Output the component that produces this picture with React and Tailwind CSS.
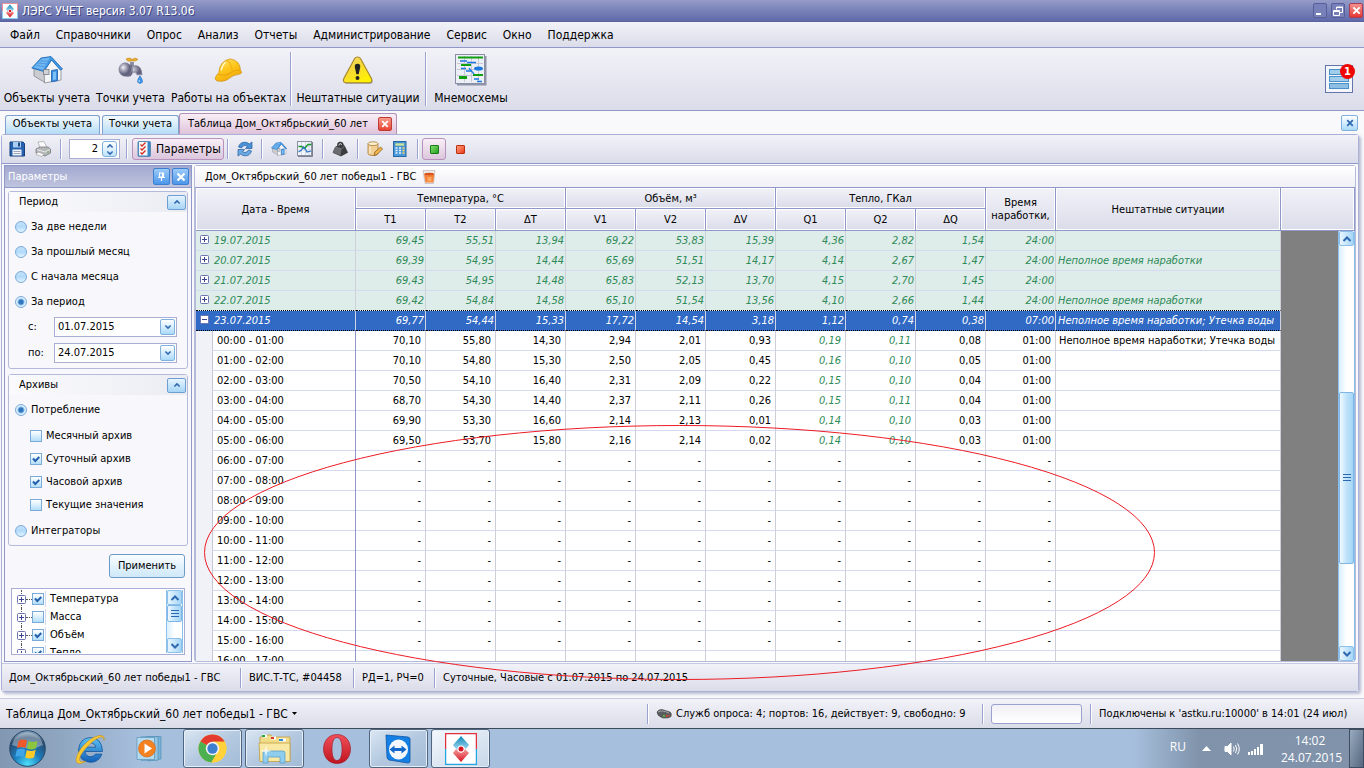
import React from "react";

const BAR = "bg-linear-to-b from-[#f2f2f8] to-[#dadce9]";

/* ---------- icons ---------- */

function LogoIcon({ className }) {
  return (
    <svg className={className} viewBox="0 0 32 32" aria-hidden="true">
      <defs>
        <linearGradient id="lgBlue" x1="0" y1="0" x2="0" y2="1">
          <stop offset="0" stopColor="#0a86b8" />
          <stop offset="1" stopColor="#a9dcf2" />
        </linearGradient>
        <linearGradient id="lgRed" x1="0" y1="0" x2="0" y2="1">
          <stop offset="0" stopColor="#f4a0a0" />
          <stop offset="1" stopColor="#d81420" />
        </linearGradient>
      </defs>
      <rect width="32" height="32" fill="#fff" />
      <path d="M.6 16V.6h30.8V16" fill="none" stroke="#e0323c" strokeWidth="1.3" />
      <path d="M.6 16v15.4h30.8V16" fill="none" stroke="#22a6e2" strokeWidth="1.3" />
      <path d="M16 3l8 9-3 4-5-3-4 4-4-5z" fill="url(#lgBlue)" />
      <path d="M16 29l-8-9 3-4 5 4 4-4 4 4z" fill="url(#lgRed)" />
      <circle cx="16" cy="16" r="3.500" fill="#fff" />
      <circle cx="16" cy="16" r="2.500" fill="#d81420" />
    </svg>
  );
}

function HouseIcon({ className }) {
  return (
    <svg className={className} viewBox="0 0 32 28" aria-hidden="true">
      <path d="M3 11v9l11 6.500V12z" fill="#c9ccd0" stroke="#85898f" strokeWidth=".8" />
      <path d="M13 14l8-10.500 9 10V24l-16.500 3z" fill="#f4f5f7" stroke="#85898f" strokeWidth=".8" />
      <path d="M10 2l10-1.500L31.500 13l-2.200 1L20.500 4 13 15.500.8 12z" fill="#3d98e8" stroke="#1c66ac" strokeWidth=".8" />
      <path d="M10.500 2.800L19 1.600 12 14 2.500 11.200z" fill="#6fb6f2" />
      <path d="M6.500 7l9 .8M4.500 9.200l9 1.500M8.500 4.800l8.500.4" stroke="#3c88d0" strokeWidth=".6" />
      <rect x="12.500" y="13.500" width="5.500" height="5" fill="#cfd3d8" stroke="#777c84" strokeWidth=".8" />
      <path d="M20.500 14.500l6-1v11.200l-6 1z" fill="#3d8ee0" stroke="#1c5ea8" strokeWidth=".8" />
      <path d="M22 16l3-.5v8L22 24z" fill="#7cc0f6" />
    </svg>
  );
}

function TapIcon({ className }) {
  return (
    <svg className={className} viewBox="0 0 26 28" aria-hidden="true">
      <defs>
        <radialGradient id="tap" cx=".35" cy=".35">
          <stop offset="0" stopColor="#f3f3fa" />
          <stop offset=".5" stopColor="#a3a3b8" />
          <stop offset="1" stopColor="#62627c" />
        </radialGradient>
      </defs>
      <path d="M12 5h4v7h-4z" fill="#8a8aa2" />
      <path d="M8 2q4-2 6 .5Q18 0 20 2.500 18 5 14 3.800 9 5.500 8 2z" fill="#f0b52c" stroke="#b57a10" strokeWidth=".6" />
      <path d="M8 9h8q8-1 8.500 9.500H19q0-3-4-2.500-2 5-7 4z" fill="url(#tap)" stroke="#8a8aa2" strokeWidth=".6" />
      <ellipse cx="7" cy="13" rx="6.500" ry="7" fill="url(#tap)" stroke="#7a7a94" strokeWidth=".6" />
      <path d="M13 8q3 6-1 12" fill="none" stroke="#5f5f78" />
      <path d="M22.300 19.500q3.400 5 2.400 6.800-2.400 2.400-4.600 0-1-2 2.200-6.800z" fill="#3c96ec" stroke="#1d68b8" strokeWidth=".6" />
      <circle cx="21.500" cy="25" r=".8" fill="#d5ecff" />
    </svg>
  );
}

function HelmetIcon({ className }) {
  return (
    <svg className={className} viewBox="0 0 30 26" aria-hidden="true">
      <defs>
        <linearGradient id="helm" x1="0" y1="0" x2=".6" y2="1">
          <stop offset="0" stopColor="#ffe98a" />
          <stop offset=".5" stopColor="#ffc81e" />
          <stop offset="1" stopColor="#f0a808" />
        </linearGradient>
      </defs>
      <path d="M5 15Q6 2.500 17 1q10 1.500 10.500 12 2.500 1.500 0 3.500Q20 17 13 23q-4 2-10 .8Q0 22 2 19z" fill="url(#helm)" stroke="#d29210" strokeWidth=".8" />
      <path d="M4.500 17q8 2 12.500-1.500Q21 12 27 13" fill="none" stroke="#e8a40c" strokeWidth="1.200" />
      <path d="M12 3q5-2 7 11" fill="none" stroke="#f2b416" strokeWidth="1.200" />
      <path d="M7.500 13Q8.500 7 12 4.500" fill="none" stroke="#fff6c0" strokeWidth="1.500" />
    </svg>
  );
}

function WarningIcon({ className }) {
  return (
    <svg className={className} viewBox="0 0 32 30" aria-hidden="true">
      <defs>
        <linearGradient id="warn" x1="0" y1="0" x2=".7" y2="1">
          <stop offset="0" stopColor="#f3dc80" />
          <stop offset=".45" stopColor="#f6d838" />
          <stop offset="1" stopColor="#fff200" />
        </linearGradient>
      </defs>
      <path d="M16 2.500q2 0 3 1.800L31 25q1 3.500-2.500 4h-24Q1.500 28.500 2.500 25z" fill="#777" opacity=".5" />
      <path d="M15.500 1q2.200 0 3.200 1.800L30 23.500q1.200 3.600-2.400 4.200H3.400Q0 27 1.200 23.500L12.400 2.800Q13.400 1 15.500 1z" fill="url(#warn)" stroke="#a8862a" strokeWidth="1.200" />
      <path d="M15.500 8q3.200 0 2.800 3.500L16.700 19h-2.400l-1.600-7.500Q12.300 8 15.500 8z" fill="#222" />
      <circle cx="15.500" cy="22.700" r="2" fill="#222" />
    </svg>
  );
}

function MnemoIcon({ className }) {
  return (
    <svg className={className} viewBox="0 0 32 32" aria-hidden="true">
      <rect x="2" y="2" width="29.500" height="29.500" fill="#9094a6" />
      <rect x=".5" y=".5" width="29" height="29" fill="#eceff5" stroke="#8a8fa6" />
      <path d="M2 9.500h26M2 15.500h26M2 21.500h26M9.500 2v26M16.500 2v26M23.500 2v26" stroke="#c5cad6" />
      <path d="M3 3.500h25M6 11h10M18 21h10" stroke="#12a012" strokeWidth="2" />
      <path d="M4 22h8v3H4z" fill="#12a012" />
      <path d="M5 7h7M12 8.500h9M6 14.500h5M11 17h5M19 25h5M22 27.500h5" stroke="#1c78e0" strokeWidth="1.500" />
      <ellipse cx="23.500" cy="14.500" rx="4.500" ry="2" fill="#1c78e0" />
      <path d="M14 14l5 6" stroke="#1c78e0" strokeWidth="1.200" />
    </svg>
  );
}

function SaveIcon() {
  return (
    <svg className="size-4" viewBox="0 0 16 16" aria-hidden="true">
      <path d="M1 1h13l1.500 1.500V15H1z" fill="#2461b0" stroke="#173f7a" />
      <rect x="4" y="1" width="8" height="5.500" fill="#a9cdf2" />
      <rect x="9" y="1.500" width="2" height="4" fill="#1c4886" />
      <rect x="3.500" y="8.500" width="9" height="6" fill="#f4f6fa" />
      <path d="M4.500 10.500h7M4.500 12.500h7" stroke="#9aa6bc" />
    </svg>
  );
}

function PrinterIcon() {
  return (
    <svg className="size-4" viewBox="0 0 16 16" aria-hidden="true">
      <path d="M3 1l6-.5 3 6H5z" fill="#fbfbfb" stroke="#aaa" strokeWidth=".8" />
      <path d="M1 8l4-2h8l2.500 2v4L10 15 1 12z" fill="#b4b6b8" stroke="#77797c" strokeWidth=".8" />
      <path d="M2 8.500l8 2.500 5-2.500" fill="none" stroke="#e7e8ea" />
      <path d="M3 11l6 2-2 2.500-6-2z" fill="#fafafa" stroke="#999" strokeWidth=".6" />
      <circle cx="13" cy="11" r=".8" fill="#4cb83c" />
    </svg>
  );
}

function ChecklistIcon() {
  return (
    <svg className="size-4" viewBox="0 0 16 16" aria-hidden="true">
      <rect x="2" y=".5" width="12.500" height="15" rx="1" fill="#3b86c6" stroke="#5a8cb8" />
      <rect x="3" y="1" width="8.500" height="13.500" fill="#f7f7f7" />
      <path d="M4.500 3.500L6 5l3.500-3.500M4.500 7.500L6 9l3.500-3.500M4.500 11.500L6 13l3.500-3.500" fill="none" stroke="#d42a1e" strokeWidth="1.300" />
    </svg>
  );
}

function RefreshIcon() {
  return (
    <svg className="size-4" viewBox="0 0 16 16" aria-hidden="true">
      <path d="M1.500 6Q3 1 8 1.200q3 .2 4.300 1.800L15 1v6.500H8.500L10.500 5Q8 3.500 5.500 5.500L4.500 7z" fill="#4a92d8" stroke="#235c9c" strokeWidth=".7" />
      <path d="M14.500 10Q13 15 8 14.800q-3-.2-4.300-1.800L1 15V8.500h6.500L5.500 11q2.500 1.500 5-.5l1-1.500z" fill="#6aaae4" stroke="#235c9c" strokeWidth=".7" />
    </svg>
  );
}

function ChartIcon() {
  return (
    <svg className="size-4" viewBox="0 0 16 16" aria-hidden="true">
      <rect x=".5" y=".5" width="14" height="14" fill="#f3f6fa" stroke="#8a90a2" />
      <path d="M1 15.500h14.500V1" fill="none" stroke="#7a8090" />
      <path d="M4.500 1v13M8.500 1v13M12 1v13M1 5h13M1 9h13" stroke="#c3cad8" strokeWidth=".7" />
      <path d="M1.500 5.500h3l3 2L11 3.500h3.500" fill="none" stroke="#1a9a2c" strokeWidth="1.400" />
      <path d="M1.500 11l3-2 2-3 2 2 1.500 3 4-1" fill="none" stroke="#2a74c8" strokeWidth="1.200" />
    </svg>
  );
}

function WeightIcon() {
  return (
    <svg className="size-4" viewBox="0 0 16 16" aria-hidden="true">
      <path d="M3.500 6l2-1Q5 1.200 8 1t3.500 3l1 1 3 6.500L9 15 1 11.500z" fill="#3c3c3e" stroke="#222" strokeWidth=".6" />
      <path d="M3.500 6L1 11.500 8.500 14.500 9.500 8z" fill="#6b6c70" />
      <path d="M3.500 6l6 2 3-3" fill="none" stroke="#8a8b90" strokeWidth=".7" />
      <path d="M7 4.500Q7 2.500 8.200 2.500T9.500 4" fill="none" stroke="#c8c8cc" />
    </svg>
  );
}

function EditDbIcon() {
  return (
    <svg className="size-4" viewBox="0 0 16 16" aria-hidden="true">
      <path d="M1 2.500v10q0 2 5 2t5-2v-10z" fill="#f1cf93" stroke="#a87a34" strokeWidth=".8" />
      <ellipse cx="6" cy="2.700" rx="5" ry="1.900" fill="#fff0cf" stroke="#a87a34" strokeWidth=".8" />
      <path d="M3 5.500v7" stroke="#fff5df" />
      <path d="M7 14.500l1-3.500 5.500-5 2 2-5.500 5.500z" fill="#f2b64a" stroke="#8a5a1c" strokeWidth=".8" />
    </svg>
  );
}

function CalcIcon() {
  return (
    <svg className="size-4" viewBox="0 0 16 16" aria-hidden="true">
      <rect x="1.500" y=".5" width="12.500" height="15" fill="#4b9bdc" stroke="#2868a4" />
      <rect x="3" y="2" width="9.500" height="3" fill="#c8e6a8" stroke="#3a76a8" strokeWidth=".5" />
      <path d="M3.500 7h2M7 7h2M3.500 9.500h2M7 9.500h2M3.500 12h2M7 12h2" stroke="#eaf5ff" strokeWidth="1.500" />
      <path d="M10.500 7h2M10.500 9.500h2M10.500 12h2" stroke="#ffd35c" strokeWidth="1.500" />
    </svg>
  );
}

function GlassIcon() {
  return (
    <svg className="size-4" viewBox="0 0 16 16" aria-hidden="true">
      <path d="M2 1.500h12l-1.500 13H4z" fill="#eeeaea" stroke="#c4bebe" strokeWidth=".8" />
      <path d="M3 5h10.300l-1 8.500H4.500z" fill="#f3813a" />
      <path d="M6.500 8h4v4.500h-4z" fill="#ffa862" />
      <ellipse cx="8.200" cy="5" rx="4.800" ry="1.200" fill="#d9531a" />
    </svg>
  );
}

function ModemIcon() {
  return (
    <svg className="h-3 w-4" viewBox="0 0 16 12" aria-hidden="true">
      <path d="M1 4q1-2.500 5-2.500l8 2.500q2 1.500 1 4.500-2 2-8 1.500Q1 8 1 4z" fill="#5b5d60" stroke="#3a3c3e" strokeWidth=".6" />
      <path d="M2 4q4-2.500 11 1" fill="none" stroke="#a2a4a8" />
      <circle cx="8" cy="8" r=".9" fill="#5fd23c" />
      <circle cx="11" cy="8" r=".9" fill="#f0442c" />
      <circle cx="13.300" cy="7.500" r=".8" fill="#f0442c" />
    </svg>
  );
}

function Chevron({ up, className }) {
  return (
    <svg className={className} viewBox="0 0 10 8" aria-hidden="true">
      <path d={up ? "M1.500 6L5 2.500 8.500 6" : "M1.500 2L5 5.500 8.500 2"} fill="none" stroke="#2e68b0" strokeWidth="2" />
    </svg>
  );
}

function CrossIcon({ className, color = "#2e68b0" }) {
  return (
    <svg className={className} viewBox="0 0 10 10" aria-hidden="true">
      <path d="M1.500 1.500l7 7M8.500 1.500l-7 7" stroke={color} strokeWidth="2.200" />
    </svg>
  );
}

function PlusBox({ minus }) {
  return (
    <svg className="relative size-[9px] shrink-0" viewBox="0 0 9 9" aria-hidden="true">
      <rect x=".5" y=".5" width="8" height="8" rx="1" fill="#fff" stroke="#6c74b0" />
      <path d={minus ? "M2 4.500h5" : "M2 4.500h5M4.500 2v5"} stroke="#3c4690" />
    </svg>
  );
}

/* ---------- small controls ---------- */

function Sep({ className = "h-5" }) {
  return <span className={`w-px shrink-0 bg-[#9aa3cf] shadow-[1px_0_0_#fff] ${className}`} />;
}

function Radio({ name, label, checked }) {
  return (
    <label className="flex h-[25px] items-center gap-1">
      <input
        type="radio"
        name={name}
        defaultChecked={checked}
        className="size-3 shrink-0 appearance-none rounded-full border border-[#7aaad8] bg-linear-to-b from-[#c4e2f8] via-[#b2dafa] to-[#e4f5ff] checked:bg-[radial-gradient(circle,#3474bd_0_2px,#7db9ea_3px,#dff1fd_4px)]"
      />
      {label}
    </label>
  );
}

function TickBox({ checked, label, id }) {
  return (
    <span className="grid size-3 shrink-0 place-items-center">
      <input
        id={id}
        type="checkbox"
        aria-label={label}
        defaultChecked={checked}
        className="peer size-3 appearance-none border border-[#7aaad8] bg-linear-to-b from-white to-[#b2def9] [grid-area:1/1]"
      />
      <svg className="pointer-events-none invisible size-2.5 peer-checked:visible [grid-area:1/1]" viewBox="0 0 10 10" aria-hidden="true">
        <path d="M2 4.500l2.300 2.500L8.300 3" fill="none" stroke="#2460ac" strokeWidth="2" />
      </svg>
    </span>
  );
}

function Group({ title, children }) {
  return (
    <section className="rounded-[3px] border border-[#b4bad9] bg-[#f8f8fc]">
      <header className="flex h-5 items-center justify-between bg-linear-to-r from-[#fbfbfd] to-[#ebecf3] pr-px pl-[10px]">
        <h2>{title}</h2>
        <button aria-label={`Свернуть: ${title}`} className="grid h-[15px] w-[19px] place-items-center rounded-[2px] border border-[#6f9fd0] bg-linear-to-b from-[#e6f4fd] to-[#a6d5f6]">
          <Chevron up className="h-[6px] w-2" />
        </button>
      </header>
      {children}
    </section>
  );
}

function DateField({ id, label, value }) {
  return (
    <div className="flex h-[26px] items-center">
      <label htmlFor={id} className="w-[26px]">{label}</label>
      <div className="flex h-5 w-[123px] items-center border border-[#a9afd4] bg-white pr-px">
        <input id={id} defaultValue={value} className="min-w-0 flex-1 pl-[3px] outline-none" />
        <button aria-label="Открыть календарь" className="grid h-4 w-[15px] place-items-center rounded-[2px] border border-[#7fb0de] bg-linear-to-b from-white to-[#a9dafa]">
          <Chevron className="h-[6px] w-2" />
        </button>
      </div>
    </div>
  );
}

function ScrollBar({ children }) {
  return (
    <div className="flex h-full w-[17px] flex-col border-x border-[#8cc0ea] bg-linear-to-r from-[#d9effc] via-white to-white">
      <button aria-label="Вверх" className="grid h-[15px] shrink-0 place-items-center rounded-[2px] border border-[#8cc0ea] bg-linear-to-r from-[#e8f6fe] to-[#a5d6f8]">
        <Chevron up className="h-2 w-2.5" />
      </button>
      {children}
      <button aria-label="Вниз" className="grid h-[15px] shrink-0 place-items-center rounded-[2px] border border-[#8cc0ea] bg-linear-to-r from-[#e8f6fe] to-[#a5d6f8]">
        <Chevron className="h-2 w-2.5" />
      </button>
    </div>
  );
}

function Thumb({ className }) {
  return (
    <div className={`grid place-items-center rounded-[2px] border border-[#7fb6e6] bg-linear-to-r from-[#f0f9ff] via-[#bfe3fa] to-[#a5d6f8] ${className}`}>
      <span className="h-[7px] w-2 border-y border-[#2e68b0] bg-[linear-gradient(#2e68b0,#2e68b0)] bg-[length:100%_1px] bg-center bg-no-repeat" />
    </div>
  );
}

/* ---------- data ---------- */

const MENU = ["Файл", "Справочники", "Опрос", "Анализ", "Отчеты", "Администрирование", "Сервис", "Окно", "Поддержка"];

const DAYS = [
  ["19.07.2015", "69,45", "55,51", "13,94", "69,22", "53,83", "15,39", "4,36", "2,82", "1,54", "24:00", ""],
  ["20.07.2015", "69,39", "54,95", "14,44", "65,69", "51,51", "14,17", "4,14", "2,67", "1,47", "24:00", "Неполное время наработки"],
  ["21.07.2015", "69,43", "54,95", "14,48", "65,83", "52,13", "13,70", "4,15", "2,70", "1,45", "24:00", ""],
  ["22.07.2015", "69,42", "54,84", "14,58", "65,10", "51,54", "13,56", "4,10", "2,66", "1,44", "24:00", "Неполное время наработки"],
  ["23.07.2015", "69,77", "54,44", "15,33", "17,72", "14,54", "3,18", "1,12", "0,74", "0,38", "07:00", "Неполное время наработки; Утечка воды"],
];

const DASHES = Array(10).fill("-").concat("");

const HOURS = [
  ["00:00 - 01:00", "70,10", "55,80", "14,30", "2,94", "2,01", "0,93", "0,19", "0,11", "0,08", "01:00", "Неполное время наработки; Утечка воды"],
  ["01:00 - 02:00", "70,10", "54,80", "15,30", "2,50", "2,05", "0,45", "0,16", "0,10", "0,05", "01:00", ""],
  ["02:00 - 03:00", "70,50", "54,10", "16,40", "2,31", "2,09", "0,22", "0,15", "0,10", "0,04", "01:00", ""],
  ["03:00 - 04:00", "68,70", "54,30", "14,40", "2,37", "2,11", "0,26", "0,15", "0,11", "0,04", "01:00", ""],
  ["04:00 - 05:00", "69,90", "53,30", "16,60", "2,14", "2,13", "0,01", "0,14", "0,10", "0,03", "01:00", ""],
  ["05:00 - 06:00", "69,50", "53,70", "15,80", "2,16", "2,14", "0,02", "0,14", "0,10", "0,03", "01:00", ""],
  ["06:00 - 07:00", ...DASHES],
  ["07:00 - 08:00", ...DASHES],
  ["08:00 - 09:00", ...DASHES],
  ["09:00 - 10:00", ...DASHES],
  ["10:00 - 11:00", ...DASHES],
  ["11:00 - 12:00", ...DASHES],
  ["12:00 - 13:00", ...DASHES],
  ["13:00 - 14:00", ...DASHES],
  ["14:00 - 15:00", ...DASHES],
  ["15:00 - 16:00", ...DASHES],
  ["16:00 - 17:00", ...DASHES],
];

const PARAMS = [["Температура", true], ["Масса", false], ["Объём", true], ["Тепло", true]];

/* ---------- sections ---------- */

function TitleBar() {
  const box = "grid h-[15px] w-[14px] place-items-center rounded-[2px] border";
  return (
    <header className="flex h-[22px] shrink-0 items-center gap-1 border-b border-[#5a63a0] bg-linear-to-b from-[#959cc8] to-[#5f69a9] pr-px pl-0.5">
      <LogoIcon className="size-4" />
      <h1 className="flex-1 text-[12px] text-white [text-shadow:1px_1px_0_#3d4680]">ЛЭРС УЧЕТ версия 3.07 R13.06</h1>
      <div className="flex gap-1">
        <button aria-label="Свернуть" className={`${box} border-[#565f9c] bg-[#7780b8]`}>
          <svg className="size-2.5" viewBox="0 0 10 10"><path d="M1 8h5" stroke="#fff" strokeWidth="2" /></svg>
        </button>
        <button aria-label="Восстановить" className={`${box} border-[#565f9c] bg-[#7780b8]`}>
          <svg className="size-2.5" viewBox="0 0 10 10" fill="none" stroke="#fff"><path d="M3.500 3.500V1h6v5.500H7M3.500 1.500h6" /><path d="M.5 4.500h6v5h-6zM.5 5.500h6" /></svg>
        </button>
        <button aria-label="Закрыть" className={`${box} border-[#a83c50] bg-linear-to-b from-[#f28f8f] to-[#e63232]`}>
          <CrossIcon className="size-[9px]" color="#fff" />
        </button>
      </div>
    </header>
  );
}

function BigButton({ icon, label, className }) {
  return (
    <button className={`flex shrink-0 flex-col items-center pt-[5px] ${className}`}>
      <span className="grid h-[34px] place-items-center">{icon}</span>
      <span className="mt-[3px] leading-4 whitespace-nowrap">{label}</span>
    </button>
  );
}

function MainToolbar() {
  return (
    <div className={`flex h-[63px] shrink-0 items-stretch border-b border-[#8f98c8] pl-0.5 text-[12px] ${BAR}`}>
      <BigButton className="w-[90px]" icon={<HouseIcon className="h-[28px] w-8" />} label="Объекты учета" />
      <BigButton className="w-[77px]" icon={<TapIcon className="h-[27px] w-[26px]" />} label="Точки учета" />
      <BigButton className="w-[119px]" icon={<HelmetIcon className="h-[25px] w-[29px]" />} label="Работы на объектах" />
      <Sep className="mr-[3px] ml-0.5 my-1" />
      <BigButton className="w-[128px]" icon={<WarningIcon className="h-[29px] w-8" />} label="Нештатные ситуации" />
      <Sep className="mx-[3px] my-1" />
      <BigButton className="w-[84px]" icon={<MnemoIcon className="size-8" />} label="Мнемосхемы" />
      <button aria-label="Уведомления: 1" className="relative mr-[11px] ml-auto size-[28px] self-center border border-[#6474ac] bg-[#f4f6fb] p-[3px]">
        <span className="flex h-full flex-col justify-between">
          <span className="h-[6px] border border-[#4a90c8] bg-[#9fcdea]" />
          <span className="h-[6px] border border-[#4a90c8] bg-[#9fcdea]" />
          <span className="h-[6px] border border-[#4a90c8] bg-[#8cbfe2]" />
        </span>
        <span className="absolute -top-[2px] -right-[3px] grid size-[15px] place-items-center rounded-full bg-[#f00505] text-[11px] leading-none font-bold text-white">1</span>
      </button>
    </div>
  );
}

function Tabs() {
  const tab = "h-[19px] rounded-t-[3px] border border-b-0 border-[#7f9fcc] bg-linear-to-b from-[#f3fafe] via-[#d6ebf9] to-[#b4dcf6] whitespace-nowrap";
  return (
    <nav className="flex h-[23px] shrink-0 items-end bg-[#f9f9fc] pr-[6px] pl-[5px]">
      <a href="#objects" className={`${tab} w-[95px] text-center`}>Объекты учета</a>
      <a href="#points" className={`${tab} ml-0.5 w-[77px] text-center`}>Точки учета</a>
      <div className="flex h-[21px] items-center gap-3 rounded-t-[3px] border border-b-0 border-[#b48fb8] bg-linear-to-b from-[#f8eef5] to-[#dfc3da] pr-1 pl-2">
        <a href="#table" aria-current="page" className="w-[178px] whitespace-nowrap">Таблица Дом_Октябрьский_60 лет</a>
        <button aria-label="Закрыть вкладку" className="grid size-[14px] place-items-center rounded-[2px] border border-[#c03a34] bg-linear-to-b from-[#f69a8c] to-[#e8402f]">
          <CrossIcon className="size-2" color="#fff" />
        </button>
      </div>
      <button aria-label="Закрыть" className="mb-[3px] ml-auto grid h-4 w-[17px] place-items-center rounded-[2px] border border-[#7fb0de] bg-linear-to-b from-white to-[#a9dafa]">
        <CrossIcon className="size-2" />
      </button>
    </nav>
  );
}

function Toolbar() {
  const ib = "grid size-5 place-items-center";
  const active = "rounded-[3px] border border-[#b892bc] bg-linear-to-b from-[#f8eff6] to-[#dcc6dc]";
  return (
    <div className={`flex h-[29px] shrink-0 items-center border-b border-[#8f98c8] pl-[5px] ${BAR}`}>
      <button aria-label="Сохранить" className={ib}><SaveIcon /></button>
      <button aria-label="Печать" className={`${ib} ml-[6px]`}><PrinterIcon /></button>
      <Sep className="mr-2 ml-[7px] h-5" />
      <div className="flex h-5 w-[51px] items-center border border-[#a9afd4] bg-white pr-0.5">
        <input aria-label="Количество" defaultValue="2" className="min-w-0 flex-1 pr-1 text-right outline-none" />
        <button aria-label="Изменить значение" className="flex h-4 w-[15px] flex-col items-center justify-center gap-px rounded-[3px] border border-[#7fb0de] bg-linear-to-b from-white to-[#bfe3fa]">
          <Chevron up className="h-[6px] w-2" />
          <Chevron className="h-[6px] w-2" />
        </button>
      </div>
      <Sep className="mr-[5px] ml-[6px] h-5" />
      <button className={`flex h-[22px] w-[92px] items-center gap-1 pl-[3px] text-[12px] whitespace-nowrap ${active}`}>
        <ChecklistIcon />Параметры
      </button>
      <Sep className="mr-[7px] ml-[3px] h-5" />
      <button aria-label="Обновить" className={ib}><RefreshIcon /></button>
      <Sep className="mx-[6px] h-5" />
      <button aria-label="Объект" className={`${ib} ml-px`}><HouseIcon className="size-4" /></button>
      <button aria-label="График" className={`${ib} ml-[6px]`}><ChartIcon /></button>
      <Sep className="mx-[7px] h-5" />
      <button aria-label="Масса" className={ib}><WeightIcon /></button>
      <Sep className="mx-[7px] h-5" />
      <button aria-label="Правка данных" className={ib}><EditDbIcon /></button>
      <button aria-label="Калькулятор" className={`${ib} ml-[5px]`}><CalcIcon /></button>
      <Sep className="mr-1 ml-[7px] h-5" />
      <button aria-label="Норма" className={`grid h-[22px] w-6 place-items-center ${active}`}>
        <span className="size-[9px] rounded-[1px] border border-[#167a16] bg-linear-to-br from-[#7fe06a] to-[#1fa01f]" />
      </button>
      <button aria-label="Ошибки" className={`${ib} ml-1`}>
        <span className="size-[9px] rounded-[1px] border border-[#b8300e] bg-linear-to-br from-[#ff9a7a] to-[#ea3410]" />
      </button>
    </div>
  );
}

function SidePanel() {
  const hb = "grid size-[17px] place-items-center rounded-[2px] border border-[#3d7fd0] bg-linear-to-b from-[#9ccbf8] to-[#4a96ea]";
  return (
    <aside className="flex w-[188px] shrink-0 flex-col border border-[#8f98c8] bg-[#f8f8fc] text-[11px]">
      <header className="flex h-[22px] shrink-0 items-center gap-0.5 border-b border-[#8f98c8] bg-linear-to-b from-[#a3a9d0] to-[#bfc4de] pr-0.5 pl-[3px] text-white">
        <h2 className="flex-1">Параметры</h2>
        <button aria-label="Закрепить" className={hb}>
          <svg className="size-[9px]" viewBox="0 0 9 9" fill="none" stroke="#fff" strokeWidth="1.200"><path d="M2.500 1h4v4h-4zM1 5.500h7M4.500 5.500V9M5.500 1v4" /></svg>
        </button>
        <button aria-label="Закрыть панель" className={hb}><CrossIcon className="size-2.5" color="#fff" /></button>
      </header>
      <div className="flex min-h-0 flex-1 flex-col px-[3px] pt-[3px] pb-[6px]">
        <Group title="Период">
          <div className="px-[6px] pt-[2px] pb-0.5">
            <Radio name="period" label="За две недели" />
            <Radio name="period" label="За прошлый месяц" />
            <Radio name="period" label="С начала месяца" />
            <Radio name="period" label="За период" checked />
            <div className="pl-[13px]">
              <DateField id="from" label="с:" value="01.07.2015" />
              <DateField id="to" label="по:" value="24.07.2015" />
            </div>
          </div>
        </Group>
        <div className="h-[5px] shrink-0" />
        <Group title="Архивы">
          <div className="px-[6px] pt-[2px] pb-0.5">
            <Radio name="archive" label="Потребление" checked />
            <div className="flex flex-col py-0.5 pl-[15px]">
              {[["Месячный архив", false], ["Суточный архив", true], ["Часовой архив", true], ["Текущие значения", false]].map(([t, c]) => (
                <label key={t} className="flex h-[23px] items-center gap-1">
                  <TickBox checked={c} />{t}
                </label>
              ))}
            </div>
            <Radio name="archive" label="Интеграторы" />
          </div>
        </Group>
        <button className="mt-[8px] mr-[3px] h-6 w-[76px] shrink-0 self-end rounded-[3px] border border-[#6b9cc6] bg-linear-to-b from-[#fbfdff] via-[#e2f2fc] to-[#cfe8f8]">Применить</button>
        <div className="mx-[3px] mt-2.5 flex min-h-0 flex-1 border border-[#a9afd4] bg-white p-px">
          <ul className="flex-1 overflow-hidden">
            {PARAMS.map(([t, c]) => (
              <li key={t} className="relative flex h-[18px] items-center pl-1 before:absolute before:inset-y-0 before:left-2 before:border-l before:border-dotted before:border-[#555]">
                <PlusBox />
                <span className="w-[6px] border-t border-dotted border-[#555]" />
                <TickBox checked={c} id={`p-${t}`} />
                <label htmlFor={`p-${t}`} className="ml-px border-l border-[#d5d9ee] pl-1">{t}</label>
              </li>
            ))}
          </ul>
          <ScrollBar>
            <Thumb className="h-[17px]" />
            <span className="flex-1" />
          </ScrollBar>
        </div>
      </div>
    </aside>
  );
}

const TH = "border-r border-b border-[#8f98c8] bg-linear-to-b from-[#f2f2f8] to-[#dadce9] p-0 text-center font-normal shadow-[inset_0_0_0_1px_#fff]";

function DataTable() {
  return (
    <div className="relative min-h-0 flex-1 overflow-hidden border-t border-[#8f98c8] bg-[#808080]">
      <table className="w-full table-fixed border-separate border-spacing-0 border-l border-[#b4bad9] text-[11px] leading-[13px]">
        <colgroup>
          <col className="w-[160px]" />
          {Array.from({ length: 10 }, (_, i) => <col key={i} className="w-[70px]" />)}
          <col className="w-[225px]" />
          <col />
        </colgroup>
        <thead>
          <tr className="h-[21px]">
            <th rowSpan={2} className={TH}>Дата - Время</th>
            <th colSpan={3} className={TH}>Температура, °С</th>
            <th colSpan={3} className={TH}>Объём, м³</th>
            <th colSpan={3} className={TH}>Тепло, ГКал</th>
            <th rowSpan={2} className={TH}>Время наработки,</th>
            <th rowSpan={2} className={TH}>Нештатные ситуации</th>
            <td rowSpan={2} className={TH} />
          </tr>
          <tr className="h-[22px]">
            {["T1", "T2", "ΔT", "V1", "V2", "ΔV", "Q1", "Q2", "ΔQ"].map((h) => <th key={h} className={TH}>{h}</th>)}
          </tr>
        </thead>
        <tbody>
          {DAYS.map((row, r) => {
            const sel = r === DAYS.length - 1;
            const dotted = "border-b [border-bottom-style:dotted] border-b-black";
            const line = sel
              ? `${dotted} border-r-[#d0d3e6]`
              : r === DAYS.length - 2
                ? `${dotted} border-r-[#cdd0d4]`
                : "border-b border-b-[#d5d9f2] border-r-[#cdd0d4]";
            return (
              <tr key={row[0]} className={`h-5 italic ${sel ? "bg-[#316ac5] text-white" : "bg-[#deecea] text-[#2e8b57]"}`}>
                <td className={`border-r p-0 ${line}`}>
                  <span className="flex items-center gap-[5px] pl-1">
                    <button aria-label={sel ? "Свернуть день" : "Развернуть день"} className="mb-[3px]"><PlusBox minus={sel} /></button>
                    {row[0]}
                  </span>
                </td>
                {row.slice(1, 11).map((v, i) => <td key={i} className={`border-r p-0 pr-px text-right ${line}`}>{v}</td>)}
                <td className={`overflow-hidden border-r p-0 pl-[2px] whitespace-nowrap ${line}`}>{row[11]}</td>
                <td className="bg-[#808080] p-0" />
              </tr>
            );
          })}
          {HOURS.map((row) => (
            <tr key={row[0]} className="h-5 bg-white">
              <td className="border-r border-[#8f98c8] bg-[#f1f2f7] p-0 pl-4">
                <span className="flex h-5 items-center border-b border-l border-b-[#d5d9f2] border-l-[#c3c7d8] bg-white pl-1">{row[0]}</span>
              </td>
              {row.slice(1, 11).map((v, i) => (
                <td key={i} className={`border-r border-b border-r-[#cdced6] border-b-[#d5d9f2] p-0 pr-1 text-right ${(i === 6 || i === 7) && v !== "-" ? "text-[#2e8b57] italic" : ""}`}>{v}</td>
              ))}
              <td className="overflow-hidden border-r border-b border-r-[#cdced6] border-b-[#d5d9f2] p-0 pl-[3px] whitespace-nowrap">{row[11]}</td>
              <td className="bg-[#808080] p-0" />
            </tr>
          ))}
        </tbody>
      </table>
      <div className="absolute top-[43px] right-0 bottom-0">
        <ScrollBar>
          <span className="flex-[147_1_0]" />
          <Thumb className="flex-[171_1_0]" />
          <span className="flex-[83_1_0]" />
        </ScrollBar>
      </div>
    </div>
  );
}

function Taskbar() {
  const btn = "grid h-[39px] w-[59px] place-items-center rounded-[3px] border border-[#4f6580] shadow-[inset_0_0_0_1px_#e6eef7] bg-linear-to-br";
  const idle = "from-[#dbe6f2] via-[#b4c9e0] to-[#a2bbd6]";
  return (
    <footer className="flex h-10 shrink-0 items-center border-t border-[#3c4a5c] bg-[linear-gradient(90deg,#8298b2_0,#8fa6c1_60px,#a6bfdc_140px,#a6bfdc_calc(100%_-_230px),#8093ab_calc(100%_-_165px),#8093ab)] text-white">
      <button aria-label="Пуск" className="ml-2 grid size-[38px] place-items-center">
        <svg className="size-[37px]" viewBox="0 0 37 37">
          <defs>
            <radialGradient id="orb" cx=".5" cy=".95" r=".95">
              <stop offset="0" stopColor="#4fe0fa" />
              <stop offset=".4" stopColor="#1c7ec0" />
              <stop offset=".8" stopColor="#27486c" />
              <stop offset="1" stopColor="#8fb0c8" />
            </radialGradient>
          </defs>
          <circle cx="18.500" cy="18.500" r="17.800" fill="url(#orb)" stroke="#2c4866" />
          <path d="M3 15Q6 3 18.500 2.500 31 3 34 15q-8 4-15.500 3.500T3 15z" fill="#fff" opacity=".35" />
          <path d="M9.500 11q4-2.500 8.500-.5l-1.500 7.500q-4-2-8.500.3z" fill="#f0592a" />
          <path d="M19.500 11q4 2.200 9-.3L27 18.200q-4.500 2.400-9 .3z" fill="#8cc63e" />
          <path d="M7.700 19.700q4.500-2.200 8.500-.2l-1.500 7.400q-4-2-8.400.2z" fill="#3fa4e8" />
          <path d="M17.700 20q4.300 2.200 9-.2l-1.600 7.400q-4.400 2.400-8.900.2z" fill="#ffc928" />
        </svg>
      </button>
      <button aria-label="Internet Explorer" className="ml-7 grid size-8 place-items-center">
        <svg className="size-8" viewBox="0 0 32 32">
          <defs><linearGradient id="ie" x1="0" y1="0" x2="0" y2="1"><stop offset="0" stopColor="#5fc2f4" /><stop offset="1" stopColor="#1260b8" /></linearGradient></defs>
          <path d="M28.500 18.500H11q.8 5.200 5.600 5.200 3.300 0 4.800-2.600h6.500Q25 29.300 16.600 29.300 5 28.500 4.500 17 5.500 5 16.600 4.500 28 5 28.500 18.500zM11.100 14.200h10.600q-1-4.300-5.200-4.300-4.300 0-5.400 4.300z" fill="url(#ie)" stroke="#0c4a92" strokeWidth=".7" />
          <path d="M30 7.500Q31.500 2 25 2.500 17 4 8.500 13.500.5 24 2.500 29q2.500 3.500 9.500-1-5.500 2-6.500-.8Q5 23 12 15 21 5.500 26.500 4 30 3.300 30 7.500z" fill="#f7c834" stroke="#c48c10" strokeWidth=".5" />
        </svg>
      </button>
      <button aria-label="Проигрыватель" className="ml-7 grid size-8 place-items-center">
        <svg className="h-[26px] w-[29px]" viewBox="0 0 29 26">
          <path d="M10 .5h15V23L12 25z" fill="#78b4d8" stroke="#4a88b0" strokeWidth=".6" />
          <path d="M5 .8h17v23.500H5z" fill="#94c6e4" stroke="#4a88b0" strokeWidth=".6" />
          <path d="M1 1.500h17.500v22H1z" fill="#b4daee" stroke="#4a88b0" strokeWidth=".6" />
          <circle cx="11" cy="12.500" r="8.500" fill="#f58220" stroke="#d0600c" strokeWidth=".6" />
          <path d="M8.500 7.500l7.500 5-7.500 5z" fill="#fff" />
        </svg>
      </button>
      <button aria-label="Chrome" className={`ml-[17px] ${btn} ${idle}`}>
        <svg className="size-[29px]" viewBox="0 0 28 28">
          <circle cx="14" cy="14" r="13.500" fill="#ffd23c" />
          <path d="M14 14L2.300 7.200A13.500 13.500 0 0 1 25.700 7.500H14z" fill="#e33b2e" />
          <path d="M14 14L2.300 7.200A13.500 13.500 0 0 0 13 27.500l5.800-10.200z" fill="#4caf50" />
          <path d="M14 7.500h11.700A13.500 13.500 0 0 1 13 27.500l6-10.500q2-5-5-9.500z" fill="#ffd23c" />
          <circle cx="14" cy="14" r="6.500" fill="#f5f5f5" />
          <circle cx="14" cy="14" r="5" fill="#3f7fd0" />
        </svg>
      </button>
      <button aria-label="Проводник" className={`ml-[3px] ${btn} ${idle}`}>
        <svg className="h-[30px] w-[34px]" viewBox="0 0 34 30">
          <path d="M2 3h4l1-2h6l1 2h18v24H2z" fill="#f2dc88" stroke="#c0a048" strokeWidth=".8" />
          <path d="M1 9h31v18.500H2z" fill="#f9e9a4" stroke="#c0a048" strokeWidth=".8" />
          <path d="M4 2h5M13 4h5M21 6h7" stroke="#fff" strokeWidth="3" />
          <path d="M4 2h3" stroke="#2ea83a" strokeWidth="2" />
          <path d="M13 4h3" stroke="#d83a2c" strokeWidth="2" />
          <path d="M21 6h4" stroke="#2c8cd8" strokeWidth="2" />
          <path d="M5 29V19q0-2 2-2h18q2 0 2 2v10h-5v-6H10v6z" fill="#8fcdee" stroke="#5aa0c8" strokeWidth=".8" />
          <path d="M8 11l1 5 5 1-5 1-1 5-1-5-5-1 5-1z" fill="#fff" opacity=".8" />
        </svg>
      </button>
      <button aria-label="Opera" className="ml-[3px] grid w-[59px] place-items-center">
        <svg className="h-[30px] w-[28px]" viewBox="0 0 28 30">
          <defs><linearGradient id="op" x1="0" y1="0" x2="0" y2="1"><stop offset="0" stopColor="#f0505a" /><stop offset="1" stopColor="#c01420" /></linearGradient></defs>
          <path fillRule="evenodd" d="M14 .5C22 .5 27.500 6.500 27.500 15S22 29.500 14 29.500.5 23.500.5 15 6 .5 14 .5zM14 3.500C10.800 3.500 9 8 9 15s1.800 11.500 5 11.500S19 22 19 15s-1.800-11.500-5-11.500z" fill="url(#op)" stroke="#a01420" strokeWidth=".6" />
        </svg>
      </button>
      <button aria-label="TeamViewer" className={`ml-[3px] ${btn} ${idle}`}>
        <svg className="size-[30px]" viewBox="0 0 30 30">
          <path d="M2 1l22 2q2 .5 2 2v22q0 2-2 2L5 26q-2-1-2-3z" fill="#1580e4" stroke="#0c56a8" strokeWidth=".8" />
          <ellipse cx="14.500" cy="15.500" rx="9.500" ry="10" fill="#f4f8fc" />
          <path d="M5.500 15.500l5-4v2.500h7v-2.500l5 4-5 4V17h-7v2.500z" fill="#1268c8" />
        </svg>
      </button>
      <button aria-label="ЛЭРС УЧЕТ" className={`ml-[3px] ${btn} from-[#f4f8fc] via-[#dde7f2] to-[#c6d6e8]`}>
        <LogoIcon className="size-8" />
      </button>
      <div className="ml-auto flex h-full items-center font-['Open_Sans','Noto_Sans',sans-serif] text-[12px] leading-[17px]">
        <button className="mr-4 mb-1">RU</button>
        <svg className="mr-[13px] h-[5px] w-[9px]" viewBox="0 0 9 5"><path d="M4.500 0L9 5H0z" fill="#fff" /></svg>
        <svg className="mr-2 size-4" viewBox="0 0 16 16" fill="none" stroke="#fff"><path d="M1 5.500h2.500L7 2v12l-3.500-3.500H1z" fill="#fff" /><path d="M9.500 5.500q1.500 2.500 0 5M11.500 4q2.500 4 0 8M13.500 2.500q3.500 5.500 0 11" /></svg>
        <svg className="mr-[17px] h-3 w-4" viewBox="0 0 16 12"><path d="M0 9h2v3H0zM3 8h2v4H3zM6 6h2v6H6zM9 4h2v8H9zM12 1h3v11h-3z" fill="#fff" /></svg>
        <div className="mr-2.5 w-[58px] text-center">
          <div>14:02</div>
          <div>24.07.2015</div>
        </div>
        <button aria-label="Показать рабочий стол" className="h-full w-[15px] border border-[#3d4d62] bg-linear-to-br from-[#9aabc0] to-[#55687f]" />
      </div>
    </footer>
  );
}

export default function App() {
  return (
    <div className="relative flex h-screen flex-col overflow-hidden bg-[#f9f9fc] font-['DejaVu_Sans_Condensed','DejaVu_Sans','Liberation_Sans',sans-serif] text-[11px] leading-[16px] font-normal text-black">
      <TitleBar />
      <nav className={`flex h-[26px] shrink-0 items-center gap-4 border-b border-[#8f98c8] pl-2.5 text-[12px] ${BAR}`}>
        {MENU.map((m) => <button key={m}>{m}</button>)}
      </nav>
      <MainToolbar />
      <Tabs />
      <main className="mr-[5px] ml-px flex min-h-0 flex-1 flex-col rounded-[3px] border border-[#aab0d8] shadow-[2px_2px_3px_#b8bbd0]">
        <Toolbar />
        <div className="mr-0.5 flex min-h-0 flex-1 gap-[2px] pt-px pb-px pl-0.5">
          <SidePanel />
          <section className="flex min-w-0 flex-1 flex-col rounded-[3px] border border-[#b4bad9]">
            <header className="flex h-[21px] shrink-0 items-center gap-[5px] bg-linear-to-b from-white to-[#f0f0f6] pl-2.5">
              <h2>Дом_Октябрьский_60 лет победы1 - ГВС</h2>
              <GlassIcon />
            </header>
            <DataTable />
          </section>
        </div>
        <div className={`flex h-7 shrink-0 items-center gap-2 border-t border-[#c5c9e2] pl-[7px] whitespace-nowrap ${BAR}`}>
          <span className="min-w-[223px]">Дом_Октябрьский_60 лет победы1 - ГВС</span>
          <Sep />
          <span className="min-w-[96px]">ВИС.Т-ТС, #04458</span>
          <Sep />
          <span className="min-w-[64px]">РД=1, РЧ=0</span>
          <Sep />
          <span>Суточные, Часовые с 01.07.2015 по 24.07.2015</span>
        </div>
      </main>
      <div className={`mt-[6px] flex h-[30px] shrink-0 items-center gap-2 border-t border-[#c5c9e2] pr-2 pl-[6px] whitespace-nowrap ${BAR}`}>
        <button className="mr-auto flex items-center gap-1 text-[12px]">
          Таблица Дом_Октябрьский_60 лет победы1 - ГВС
          <svg className="h-[3px] w-[5px]" viewBox="0 0 5 3" aria-hidden="true"><path d="M0 0h5L2.500 3z" /></svg>
        </button>
        <Sep />
        <span className="flex min-w-[318px] items-center gap-1"><ModemIcon />Служб опроса: 4; портов: 16, действует: 9, свободно: 9</span>
        <Sep />
        <input aria-label="Состояние" readOnly className="h-5 w-[91px] rounded-[3px] border border-[#9aa3cf] bg-linear-to-b from-[#f0f0f6] to-white" />
        <Sep />
        <span className="min-w-[257px]">Подключены к 'astku.ru:10000' в 14:01 (24 июл)</span>
      </div>
      <Taskbar />
      <svg className="pointer-events-none absolute top-[425px] left-[204px] h-[255px] w-[952px]" viewBox="0 0 952 255" fill="none" aria-hidden="true">
        <ellipse cx="475.500" cy="127.500" rx="475" ry="127" stroke="#ed1c24" />
      </svg>
    </div>
  );
}
